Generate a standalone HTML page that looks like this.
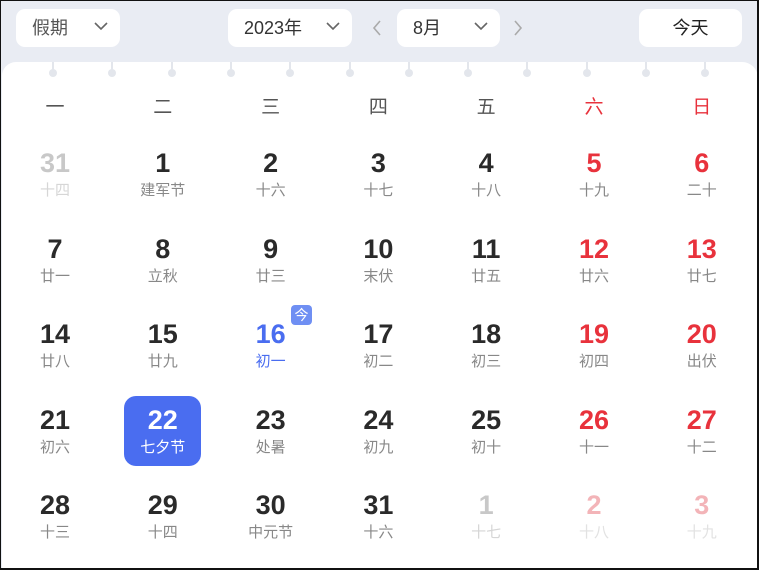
<!DOCTYPE html>
<html><head><meta charset="utf-8"><style>
*{margin:0;padding:0;box-sizing:border-box}
html,body{width:759px;height:570px;overflow:hidden;background:#fff}
body{font-family:"Liberation Sans","Noto Sans CJK SC",sans-serif;position:relative}
.frame{position:absolute;left:0;top:0;width:759px;height:570px;border:1px solid #111;border-right-width:2px;border-bottom-width:2px;background:#e9ecf3;overflow:hidden}
.sel{position:absolute;top:8px;height:38px;background:#fff;border-radius:9px;font-size:18px;color:#333;line-height:38px}
.sel .t{position:absolute;left:16px}
.sel svg{position:absolute;right:12px;top:13px}
.card{position:absolute;left:1px;top:61px;width:756px;height:520px;background:#fff;border-radius:14px 16px 0 0}
.pin{position:absolute;top:61px;width:8px}
.pin i{position:absolute;left:3px;top:0;width:2px;height:8px;background:#e3e6ec}
.pin b{position:absolute;left:0;top:7px;width:8px;height:8px;border-radius:50%;background:#e3e6ec}
.wk{position:absolute;top:91px;width:108px;text-align:center;font-size:19px;color:#555}
.c{position:absolute;width:108px;height:85px;text-align:center}
.n{position:absolute;left:0;right:0;top:2px;font-size:27px;font-weight:bold;color:#2a2a2a;font-family:"Liberation Sans",sans-serif}
.l{position:absolute;left:0;right:0;top:33px;font-size:15px;color:#888}
.r .n{color:#e8323c}.g .n{color:#c8c8c8}.g .l{color:#d6d6d6}.p .n{color:#f3b4b8}.p .l{color:#e2e2e2}
</style></head><body><div class="frame">
<div class="sel" style="left:15px;width:104px"><span class="t" style="color:#555">假期</span><svg width="14" height="9" viewBox="0 0 14 9"><path d="M1 1l6 6 6-6" fill="none" stroke="#666" stroke-width="1.6"/></svg></div>
<div class="sel" style="left:227px;width:124px"><span class="t">2023年</span><svg width="14" height="9" viewBox="0 0 14 9"><path d="M1 1l6 6 6-6" fill="none" stroke="#666" stroke-width="1.6"/></svg></div>
<svg style="position:absolute;left:371px;top:19px" width="10" height="16"><path d="M8 1L2 8l6 7" fill="none" stroke="#aaa" stroke-width="1.6"/></svg>
<div class="sel" style="left:396px;width:103px"><span class="t">8月</span><svg width="14" height="9" viewBox="0 0 14 9"><path d="M1 1l6 6 6-6" fill="none" stroke="#666" stroke-width="1.6"/></svg></div>
<svg style="position:absolute;left:512px;top:19px" width="10" height="16"><path d="M2 1l6 7-6 7" fill="none" stroke="#aaa" stroke-width="1.6"/></svg>
<div class="sel" style="left:638px;width:103px;text-align:center;color:#222">今天</div>
<div class="card"></div>
<div id="x"></div>
</div>
<script>
var h='';
for(var i=0;i<12;i++){h+='<div class="pin" style="left:'+(48+i*59.3)+'px"><i></i><b></b></div>';}
var w=['一','二','三','四','五','六','日'];
for(var i=0;i<7;i++)h+='<div class="wk" style="left:'+(i*107.8)+'px;'+(i>4?'color:#e8323c':'')+'">'+w[i]+'</div>';
var d=[['31','十四','g'],['1','建军节'],['2','十六'],['3','十七'],['4','十八'],['5','十九','r'],['6','二十','r'],
['7','廿一'],['8','立秋'],['9','廿三'],['10','末伏'],['11','廿五'],['12','廿六','r'],['13','廿七','r'],
['14','廿八'],['15','廿九'],['16','初一','t'],['17','初二'],['18','初三'],['19','初四','r'],['20','出伏','r'],
['21','初六'],['22','七夕节','s'],['23','处暑'],['24','初九'],['25','初十'],['26','十一','r'],['27','十二','r'],
['28','十三'],['29','十四'],['30','中元节'],['31','十六'],['1','十七','g'],['2','十八','p'],['3','十九','p']];
for(var k=0;k<35;k++){var r=Math.floor(k/7),c=k%7,x=c*107.8,y=r*85.5+145,e=d[k],cl=e[2]||'';
var ex='';
if(cl=='s'){h+='<div style="position:absolute;left:123px;top:395px;width:77px;height:70px;background:#4a6df0;border-radius:12px"></div>';}
if(cl=='t'){ex='<div style="position:absolute;left:290px;top:304px;width:21px;height:20px;background:#6f8ff3;border-radius:4px;color:#fff;font-size:14px;line-height:20px;text-align:center">今</div>';}
var nc=cl=='s'?'color:#fff':cl=='t'?'color:#4a6df0':'';
h+='<div class="c '+cl+'" style="left:'+x+'px;top:'+y+'px"><div class="n" style="'+nc+'">'+e[0]+'</div><div class="l" style="'+nc+'">'+e[1]+'</div></div>'+ex;}
document.getElementById('x').innerHTML=h;
</script>
</body></html>
